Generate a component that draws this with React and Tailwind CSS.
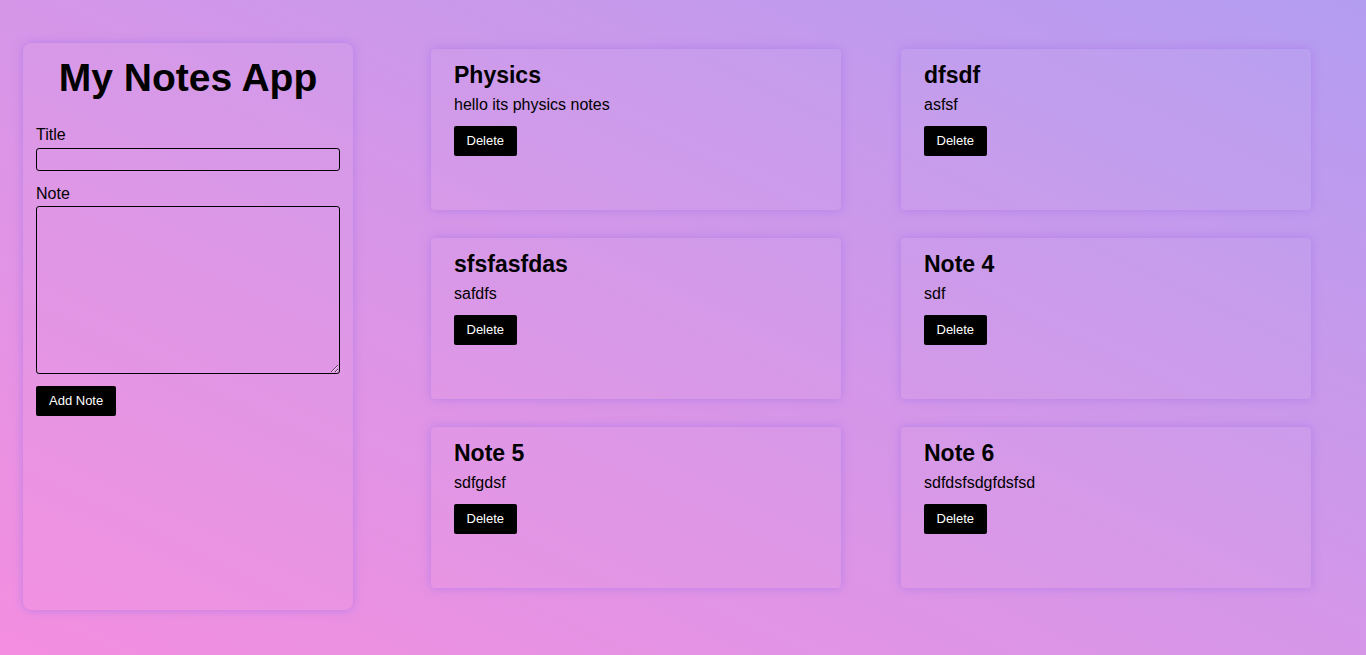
const notes = [
  { id: 1, title: 'Physics', body: 'hello its physics notes' },
  { id: 2, title: 'dfsdf', body: 'asfsf' },
  { id: 3, title: 'sfsfasfdas', body: 'safdfs' },
  { id: 4, title: 'Note 4', body: 'sdf' },
  { id: 5, title: 'Note 5', body: 'sdfgdsf' },
  { id: 6, title: 'Note 6', body: 'sdfdsfsdgfdsfsd' },
];

function NoteCard({ note }) {
  return (
    <div className="h-[161px] rounded-[4px] bg-white/[0.03] px-[23px] pt-[13px] shadow-[0_0_10px_rgba(170,120,235,0.75)]">
      <h2 className="text-[23px] font-bold leading-[26px]">{note.title}</h2>
      <p className="mt-[8px] text-[16px] leading-[18px]">{note.body}</p>
      <button className="mt-[12px] h-[30px] rounded-[2px] bg-black px-[12.5px] text-[13px] text-white">
        Delete
      </button>
    </div>
  );
}

export default function App() {
  return (
    <div
      className="flex min-h-[655px] w-full items-start bg-gradient-to-tr from-[#f48ee0] via-[#d596e8] to-[#b39df1] pl-[23px] pt-[43px] text-black"
      style={{ fontFamily: '"Liberation Sans", Arial, sans-serif' }}
    >
      {/* Sidebar form */}
      <div className="h-[567px] w-[330px] rounded-lg bg-white/[0.03] px-[13px] pt-[12px] shadow-[0_0_10px_rgba(170,120,235,0.75)]">
        <h1 className="text-center text-[39px] font-bold leading-[45px]">My Notes App</h1>
        <label className="mt-[26px] block text-[16px] leading-[18px]">Title</label>
        <input className="mt-[4px] block h-[23px] w-full rounded-[3px] border border-black bg-transparent px-1 outline-none" />
        <label className="mt-[14px] block text-[16px] leading-[18px]">Note</label>
        <textarea className="mt-[3px] block h-[168px] w-full rounded-[3px] border border-black bg-transparent px-1 outline-none" />
        <button className="mt-[12px] h-[30px] rounded-[2px] bg-black px-[13px] text-[13px] text-white">
          Add Note
        </button>
      </div>

      {/* Notes */}
      <div className="ml-[78px] mt-[6px] grid grid-cols-[410px_410px] gap-x-[60px] gap-y-[28px]">
        {notes.map((note) => (
          <NoteCard key={note.id} note={note} />
        ))}
      </div>
    </div>
  );
}
